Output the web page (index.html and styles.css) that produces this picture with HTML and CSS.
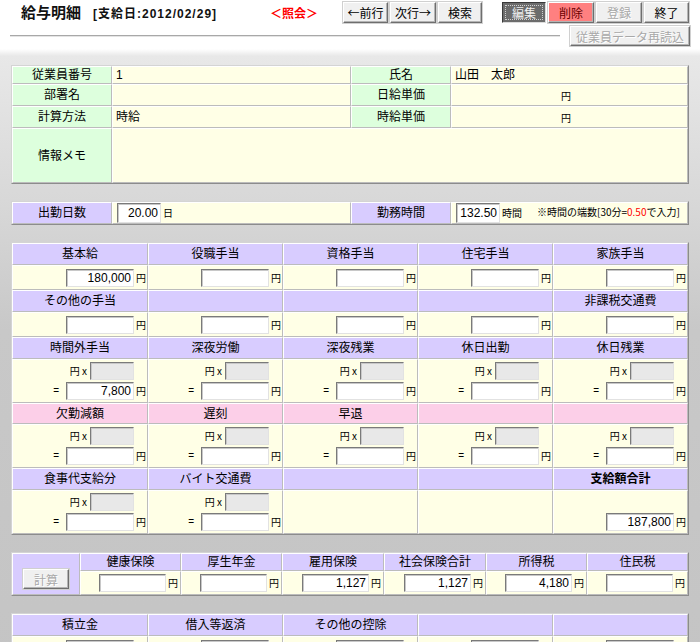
FILE: index.html
```html
<!DOCTYPE html>
<html lang="ja">
<head>
<meta charset="utf-8">
<title>給与明細</title>
<link rel="stylesheet" href="styles.css">
</head>
<body>
<header class="top">
  <div class="bar">
    <h1 class="title">給与明細</h1>
    <span class="payday">[支給日:2012/02/29]</span>
    <span class="mode">＜照会＞</span>
    <div class="btn-group">
      <button class="btn w45">←前行</button>
      <button class="btn w46">次行→</button>
      <button class="btn w44">検索</button>
    </div>
    <div class="btn-group second">
      <button class="btn w44 edit"><span class="focus">編集</span></button>
      <button class="btn w46 del">削除</button>
      <button class="btn w46" disabled>登録</button>
      <button class="btn w45">終了</button>
    </div>
  </div>
  <div class="bar2">
    <div class="rule"></div>
    <button class="btn reload" disabled>従業員データ再読込</button>
  </div>
</header>

<main class="content">
  <table class="grid info">
    <colgroup><col class="i-l"><col class="i-v"><col class="i-l"><col class="i-v2"></colgroup>
    <tr class="r18"><th class="lab">従業員番号</th><td class="val">1</td><th class="lab">氏名</th><td class="val">山田　太郎</td></tr>
    <tr class="r22"><th class="lab">部署名</th><td class="val"></td><th class="lab">日給単価</th><td class="val yen"><span class="u">円</span></td></tr>
    <tr class="r22"><th class="lab">計算方法</th><td class="val">時給</td><th class="lab">時給単価</th><td class="val yen"><span class="u">円</span></td></tr>
    <tr class="r55"><th class="lab">情報メモ</th><td class="val" colspan="3"></td></tr>
  </table>

  <table class="grid att">
    <colgroup><col class="i-l"><col class="i-v"><col class="i-l"><col class="i-v2"></colgroup>
    <tr class="r22">
      <th class="hd-c">出勤日数</th>
      <td class="val pl"><input class="num n44" value="20.00" readonly><span class="u gap5">日</span></td>
      <th class="hd-c">勤務時間</th>
      <td class="val pl"><input class="num n44" value="132.50" readonly><span class="u gap6">時間</span><span class="note">※時間の端数[30分=<em>0.50</em>で入力]</span></td>
    </tr>
  </table>

  <table class="grid pay">
    <colgroup><col class="p1"><col class="p"><col class="p"><col class="p"><col class="p"></colgroup>
    <tr class="hd"><th>基本給</th><th>役職手当</th><th>資格手当</th><th>住宅手当</th><th>家族手当</th></tr>
    <tr class="v1">
      <td><input class="num" value="180,000" readonly><span class="u">円</span></td>
      <td><input class="num" readonly><span class="u">円</span></td>
      <td><input class="num" readonly><span class="u">円</span></td>
      <td><input class="num" readonly><span class="u">円</span></td>
      <td><input class="num" readonly><span class="u">円</span></td>
    </tr>
    <tr class="hd"><th>その他の手当</th><th></th><th></th><th></th><th>非課税交通費</th></tr>
    <tr class="v1">
      <td><input class="num" readonly><span class="u">円</span></td>
      <td><input class="num" readonly><span class="u">円</span></td>
      <td><input class="num" readonly><span class="u">円</span></td>
      <td><input class="num" readonly><span class="u">円</span></td>
      <td><input class="num" readonly><span class="u">円</span></td>
    </tr>
    <tr class="hd"><th>時間外手当</th><th>深夜労働</th><th>深夜残業</th><th>休日出勤</th><th>休日残業</th></tr>
    <tr class="v2">
      <td><div class="ln"><span class="u">円 x</span><input class="num rate" readonly><span class="sp"></span></div><div class="ln"><span class="eq">=</span><input class="num" value="7,800" readonly><span class="u">円</span></div></td>
      <td><div class="ln"><span class="u">円 x</span><input class="num rate" readonly><span class="sp"></span></div><div class="ln"><span class="eq">=</span><input class="num" readonly><span class="u">円</span></div></td>
      <td><div class="ln"><span class="u">円 x</span><input class="num rate" readonly><span class="sp"></span></div><div class="ln"><span class="eq">=</span><input class="num" readonly><span class="u">円</span></div></td>
      <td><div class="ln"><span class="u">円 x</span><input class="num rate" readonly><span class="sp"></span></div><div class="ln"><span class="eq">=</span><input class="num" readonly><span class="u">円</span></div></td>
      <td><div class="ln"><span class="u">円 x</span><input class="num rate" readonly><span class="sp"></span></div><div class="ln"><span class="eq">=</span><input class="num" readonly><span class="u">円</span></div></td>
    </tr>
    <tr class="hd pink"><th>欠勤減額</th><th>遅刻</th><th>早退</th><th></th><th></th></tr>
    <tr class="v2">
      <td><div class="ln"><span class="u">円 x</span><input class="num rate" readonly><span class="sp"></span></div><div class="ln"><span class="eq">=</span><input class="num" readonly><span class="u">円</span></div></td>
      <td><div class="ln"><span class="u">円 x</span><input class="num rate" readonly><span class="sp"></span></div><div class="ln"><span class="eq">=</span><input class="num" readonly><span class="u">円</span></div></td>
      <td><div class="ln"><span class="u">円 x</span><input class="num rate" readonly><span class="sp"></span></div><div class="ln"><span class="eq">=</span><input class="num" readonly><span class="u">円</span></div></td>
      <td><div class="ln"><span class="u">円 x</span><input class="num rate" readonly><span class="sp"></span></div><div class="ln"><span class="eq">=</span><input class="num" readonly><span class="u">円</span></div></td>
      <td><div class="ln"><span class="u">円 x</span><input class="num rate" readonly><span class="sp"></span></div><div class="ln"><span class="eq">=</span><input class="num" readonly><span class="u">円</span></div></td>
    </tr>
    <tr class="hd"><th>食事代支給分</th><th>バイト交通費</th><th></th><th></th><th class="bold">支給額合計</th></tr>
    <tr class="v2">
      <td><div class="ln"><span class="u">円 x</span><input class="num rate" readonly><span class="sp"></span></div><div class="ln"><span class="eq">=</span><input class="num" readonly><span class="u">円</span></div></td>
      <td><div class="ln"><span class="u">円 x</span><input class="num rate" readonly><span class="sp"></span></div><div class="ln"><span class="eq">=</span><input class="num" readonly><span class="u">円</span></div></td>
      <td></td>
      <td></td>
      <td><div class="ln"></div><div class="ln"><input class="num" value="187,800" readonly><span class="u">円</span></div></td>
    </tr>
  </table>

  <table class="grid ded">
    <colgroup><col class="d0"><col class="d1"><col class="d1"><col class="d2"><col class="d2"><col class="d1"><col class="d1"></colgroup>
    <tr class="dh">
      <th rowspan="2" class="calc"><button class="btn calc-btn" disabled>計算</button></th>
      <th>健康保険</th><th>厚生年金</th><th>雇用保険</th><th>社会保険合計</th><th>所得税</th><th>住民税</th>
    </tr>
    <tr class="dv">
      <td><input class="num n67" readonly><span class="u">円</span></td>
      <td><input class="num n67" readonly><span class="u">円</span></td>
      <td><input class="num n67" value="1,127" readonly><span class="u">円</span></td>
      <td><input class="num n67" value="1,127" readonly><span class="u">円</span></td>
      <td><input class="num n67" value="4,180" readonly><span class="u">円</span></td>
      <td><input class="num n67" readonly><span class="u">円</span></td>
    </tr>
  </table>

  <table class="grid pay">
    <colgroup><col class="p1"><col class="p"><col class="p"><col class="p"><col class="p"></colgroup>
    <tr class="hd"><th>積立金</th><th>借入等返済</th><th>その他の控除</th><th></th><th></th></tr>
    <tr class="v1">
      <td><input class="num" readonly><span class="u">円</span></td>
      <td><input class="num" readonly><span class="u">円</span></td>
      <td><input class="num" readonly><span class="u">円</span></td>
      <td><input class="num" readonly><span class="u">円</span></td>
      <td><input class="num" readonly><span class="u">円</span></td>
    </tr>
  </table>
</main>
</body>
</html>
```

FILE: styles.css
```css
* { box-sizing: border-box; }

html, body { margin: 0; padding: 0; }

body {
  font-family: "Liberation Sans", "Noto Sans CJK JP", sans-serif;
  font-size: 12px;
  color: #000;
  background-color: #c4c4c4;
  background-image: linear-gradient(to bottom, #ffffff 0, #ffffff 49px, #e8e8e8 56px, #d8d8d8 200px, #c8c8c8 330px, #c4c4c4 700px);
  background-repeat: no-repeat;
  min-height: 642px;
}

/* ---------- header ---------- */
.top { height: 47px; }

.bar {
  display: flex;
  align-items: center;
  height: 23px;
  padding: 1px 0 0 21px;
}

.title {
  margin: 0;
  width: 72px;
  font-family: "Noto Sans CJK JP", sans-serif;
  font-size: 15px;
  font-weight: bold;
  line-height: 20px;
  color: #111;
}

.payday {
  width: 177px;
  font-weight: bold;
  font-size: 12px;
  letter-spacing: 1px;
  color: #111;
}

.mode {
  width: 73px;
  font-family: "Noto Sans CJK JP", sans-serif;
  font-weight: bold;
  color: #ff0000;
}

.btn-group { display: flex; gap: 2px; }
.btn-group.second { margin-left: 20px; }

.btn {
  height: 21px;
  padding: 0;
  font-family: "Noto Sans CJK JP", sans-serif;
  font-size: 12px;
  line-height: 17px;
  color: #000;
  background: #f0f0f0;
  border: 1px solid;
  border-color: #ffffff #6e6e6e #6e6e6e #ffffff;
  box-shadow: inset -1px -1px 0 #b4b4b4, 0 0 0 1px #d0d0d0;
}
.btn:disabled { color: #a8a8a8; text-shadow: 1px 1px 0 #ffffff; }

.w44 { width: 44px; }
.w45 { width: 45px; }
.w46 { width: 46px; }

.edit {
  background: #6c6c6c;
  color: #f0f0f0;
  border-color: #3a3a3a #dcdcdc #dcdcdc #3a3a3a;
  box-shadow: none;
  padding: 2px;
}
.edit .focus {
  display: block;
  height: 15px;
  line-height: 13px;
  border: 1px dotted #d0d0d0;
}
.del { background: #ff8080; color: #6a0000; }

.bar2 {
  display: flex;
  align-items: center;
  margin-top: 3px;
  padding-left: 10px;
}
.rule {
  width: 550px;
  height: 2px;
  border-top: 1px solid #a8a8a8;
  border-bottom: 1px solid #e4e4e4;
}
.reload {
  margin-left: 10px;
  width: 120px;
  height: 20px;
}

/* ---------- content ---------- */
.content { padding: 18px 11px 0 11px; }

.grid {
  width: 678px;
  table-layout: fixed;
  border-collapse: separate;
  border-spacing: 0;
  border: 1px solid;
  border-color: #d4d4d4 #8c8c8c #8c8c8c #d4d4d4;
  margin-bottom: 17px;
}
.grid th, .grid td {
  padding: 0;
  font-weight: normal;
  font-family: "Liberation Sans", "Noto Sans CJK JP", sans-serif;
  font-size: 12px;
  line-height: 14px;
  border-top: 1px solid #ffffff;
  border-left: 1px solid #ffffff;
  border-right: 1px solid #bcbcbc;
  border-bottom: 1px solid #bcbcbc;
  vertical-align: middle;
}

/* info table */
.i-l { width: 100px; }
.i-v { width: 239px; }
.i-v2 { width: 237px; }

.lab { background: #ddffdd; text-align: center; }
.val { background: #ffffe6; text-align: left; padding-left: 3px !important; }
.yen { text-align: center; padding-right: 12px !important; }
.r18 th, .r18 td { height: 18px; }
.r22 th, .r22 td { height: 22px; }
.r55 th, .r55 td { height: 55px; }

/* attendance */
.att { margin-bottom: 17px; }
.hd-c { background: #d8ccff; text-align: center; }
.pl { padding-left: 4px !important; white-space: nowrap; }
.gap5 { margin-left: 5px; }
.gap6 { margin-left: 6px; }
.note {
  margin-left: 15px;
  font-family: "Noto Sans CJK JP", sans-serif;
  font-size: 10px;
}
.note em { font-style: normal; color: #ff0000; }

/* payments */
.p1 { width: 136px; }
.p { width: 135px; }

.pay .hd th { background: #d8ccff; text-align: center; height: 22px; }
.pay .hd.pink th { background: #fccfe8; height: 21px; }
.pay th.bold { font-weight: bold; }
.pay td { background: #ffffe6; text-align: right; padding-right: 1px; }
.v1 td { height: 25px; }
.v2 td { height: 44px; }

.ln {
  display: flex;
  justify-content: flex-end;
  align-items: center;
  height: 18px;
}
.ln + .ln { margin-top: 2px; }

.u {
  font-family: "Noto Sans CJK JP", sans-serif;
  font-size: 10px;
  line-height: 12px;
  margin-left: 2px;
  vertical-align: middle;
}
.ln .u:first-child { margin-left: 0; margin-right: 3px; }
.sp { display: inline-block; width: 12px; }
.eq { font-size: 10px; margin-right: 7px; }

.num {
  width: 68px;
  height: 18px;
  margin: 0;
  padding: 0 2px;
  font-family: "Liberation Sans", sans-serif;
  font-size: 12px;
  color: #000;
  text-align: right;
  background: #ffffff;
  border: 1px solid;
  border-color: #7a7a7a #e2e2e2 #e2e2e2 #7a7a7a;
  box-shadow: inset 1px 1px 0 #c8c8c8;
  vertical-align: middle;
  outline: none;
}
.num.rate { width: 44px; background: #e8e8e8; }
.num.n44 { width: 44px; height: 20px; }
.num.n67 { width: 67px; }

/* deductions */
.d0 { width: 68px; }
.d1 { width: 101px; }
.d2 { width: 102px; }
.ded .dh th { background: #d8ccff; text-align: center; height: 18px; }
.ded th.calc { background: #d8ccff; }
.ded .dv td { background: #ffffe6; text-align: right; padding-right: 2px; height: 24px; }
.calc-btn { width: 46px; height: 20px; margin-top: 10px; }
```
